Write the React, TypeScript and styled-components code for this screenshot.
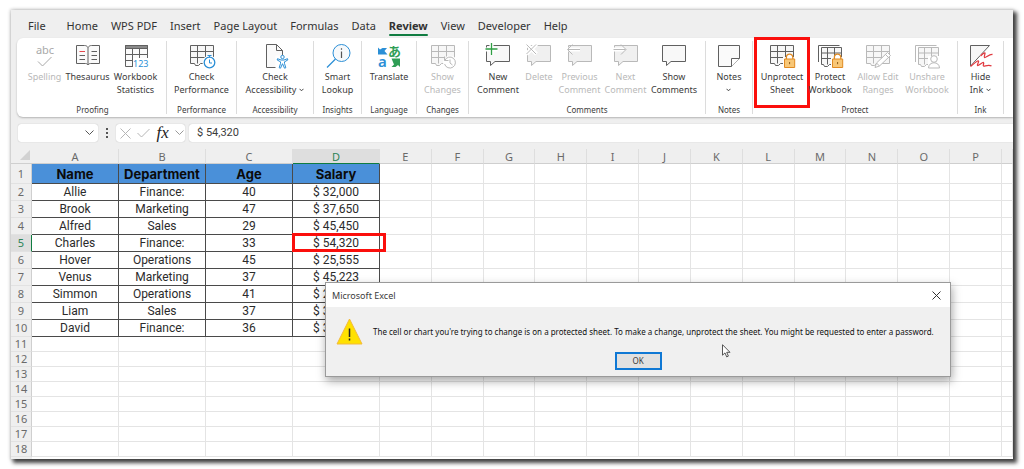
import React from "react";
import styled, { createGlobalStyle, css } from "styled-components";

const UI = `"Noto Sans", "Open Sans", sans-serif`;
const CELL = `Roboto, "Liberation Sans", sans-serif`;
const GREEN = "#107c41";
const INK = "#3b3b3b";
const MUTED = "#b9b9b9";
const BLUE = "#2b8fd6";

const GlobalStyle = createGlobalStyle`
  *, *::before, *::after { box-sizing: border-box; }
  html { background: #fff; }
  body { margin: 0; padding: 10px 11px 11px; overflow: hidden; font-family: ${UI}; color: ${INK}; }
  button, input, select { font: inherit; color: inherit; }
`;

const Window = styled.main`
  position: relative;
  background: #efefef;
  box-shadow: 0 0 3px 1px rgba(0, 0, 0, 0.16), 3px 3px 4px 1px rgba(0, 0, 0, 0.72);
`;

const Clip = styled.div`
  overflow: hidden;
`;

/* ---------- Tabs ---------- */

const TabBar = styled.nav`
  display: flex;
  align-items: center;
  gap: 13px;
  height: 28px;
  padding: 4px 17px 0;
`;

const Tab = styled.a<{ $active?: boolean; $wide?: boolean }>`
  position: relative;
  margin-right: ${(p) => (p.$wide ? 8 : 0)}px;
  font-size: 11px;
  line-height: 16px;
  color: #333;
  text-decoration: none;
  white-space: nowrap;
  ${(p) =>
    p.$active &&
    css`
      font-weight: 700;
      &::after {
        content: "";
        position: absolute;
        left: 0;
        right: 0;
        bottom: -2px;
        height: 2px;
        border-radius: 1px;
        background: ${GREEN};
      }
    `}
`;

/* ---------- Ribbon ---------- */

const Ribbon = styled.div`
  display: flex;
  height: 79px;
  margin-left: 6px;
  padding: 3px 0 3px 2px;
  background: #fff;
  border-radius: 6px 0 0 6px;
  box-shadow: 0 1px 2px rgba(0, 0, 0, 0.25);
`;

const Group = styled.section<{ $w: number }>`
  display: flex;
  flex: none;
  flex-direction: column;
  justify-content: space-between;
  width: ${(p) => p.$w}px;
  border-right: 1px solid #dcdcdc;
`;

const Tools = styled.div`
  display: flex;
  justify-content: center;
`;

const GroupName = styled.h2`
  margin: 0;
  font-size: 8px;
  font-weight: 400;
  line-height: 8px;
  text-align: center;
`;

const Tool = styled.button<{ $w: number; $marked?: boolean }>`
  position: relative;
  display: flex;
  flex: none;
  flex-direction: column;
  align-items: center;
  gap: 2px;
  width: ${(p) => p.$w}px;
  padding: 3px 0 0;
  border: 0;
  background: none;
  font-size: 9px;
  line-height: 13px;
  white-space: nowrap;
  &:disabled {
    color: ${MUTED};
  }
  ${(p) =>
    p.$marked &&
    css`
      &::after {
        content: "";
        position: absolute;
        inset: -4px -4px -12px;
        border: 3px solid #fb0f0c;
      }
    `}
`;

const Glyph = styled.svg`
  display: block;
  width: 26px;
  height: 24px;
  overflow: visible;
  fill: none;
  stroke: #606060;
  stroke-width: 1;
  button:disabled & {
    stroke: ${MUTED};
  }
`;

const Line = styled.span`
  display: flex;
  align-items: center;
  justify-content: center;
  gap: 3px;
  min-height: 13px;
`;

const Caret = () => (
  <svg width="5" height="4" viewBox="0 0 5 4" fill="none" stroke="#444">
    <path d="M.5 .8 2.5 2.8 4.5 .8" />
  </svg>
);

const Grid = () => (
  <>
    <path fill="#f7f7f7" d="M1.5 1.5h23v18h-13l-2 2h-3l-1-2h-4z" />
    <path d="M1.5 7.5h23M1.5 13.5h23M8.5 1.5v18M16.5 1.5v18" />
  </>
);

const Lock = () => (
  <>
    <path stroke="#fff" strokeWidth="3" d="M15.5 14.5h10v9h-10z" />
    <path stroke="#e08a22" strokeWidth="1.3" fill="#fff" d="M17.4 15.5v-2.2a3.2 3.2 0 0 1 6.4 0v2.2" />
    <path stroke="#e08a22" fill="#f8c777" d="M15.5 15h10.2v8.5h-10.2z" />
    <path stroke="#8a5a18" d="M20.6 18v2.2" />
  </>
);

const Sheets = () => (
  <>
    <path d="M1.5 18V1.5h21" />
    <path fill="#f7f7f7" d="M4.5 3.5h20v17h-12l-2 2h-3l-1-2h-2z" />
    <path d="M4.5 9h20M4.5 14.5h20M10.5 3.5v17M17.5 3.5v17" />
  </>
);

const Bubble = ({ fill = "#f8f8f8" }: { fill?: string }) => (
  <path fill={fill} d="M1.5 1.5h23v16h-14.5l-4.5 4v-4h-4z" />
);

const icons: Record<string, React.ReactNode> = {
  spelling: (
    <>
      <text x="13" y="10" textAnchor="middle" fontSize="11" fill="#a9a9a9" stroke="none">
        abc
      </text>
      <path stroke="#a9a9a9" d="M6 17.5l4.5 4.5 9-9" />
    </>
  ),
  thesaurus: (
    <>
      <path
        fill="#fafafa"
        d="M13 3.5C12 2 11 1.5 9.5 1.5h-8v18h9c1 0 2 .5 2.5 1.5.5-1 1.5-1.5 2.5-1.5h9v-18h-8c-1.5 0-2.5.5-3.5 2z"
      />
      <path d="M13 3.5v17.5M4.5 11.5h5.5M4.5 15.5h5.5M16.5 7.5h5.5M16.5 11.5h5.5M16.5 15.5h5.5" />
      <path stroke="#e5484d" d="M4.5 7.5h5.5" />
    </>
  ),
  statistics: (
    <>
      <path fill="#fafafa" d="M2.5 1.5h22v21h-22z" />
      <path fill="#8a8a8a" d="M2.5 1.5h22v3h-22z" />
      <path d="M2.5 10.5h22M2.5 16.5h22M9.5 4.5v18M16.5 4.5v18" />
      <path fill="#fff" stroke="none" d="M10 14h16v10h-16z" />
      <text x="10" y="23" fontSize="9" fill={BLUE} stroke="none">
        123
      </text>
    </>
  ),
  performance: (
    <>
      <Grid />
      <circle cx="20.5" cy="18.5" r="7" fill="#fff" stroke="none" />
      <circle cx="20.5" cy="18.5" r="5.3" fill="#fff" stroke={BLUE} strokeWidth="1.3" />
      <path stroke={BLUE} d="M20.5 15.5v3.5h2.5M18.5 11.5h4M20.5 11.5v2" />
    </>
  ),
  accessibility: (
    <>
      <path fill="#fafafa" d="M4.5 .5h10l6 6v17h-16z" />
      <path d="M14.5 .5v6h6" />
      <path stroke="#fff" strokeWidth="3" d="M15 13h11v10h-11z" fill="#fff" />
      <circle cx="20.5" cy="13" r="1.7" stroke={BLUE} fill="#fff" />
      <path
        stroke={BLUE}
        fill="#fff"
        d="M15.5 14.7l3.5 1.3h3l3.5-1.3.3 1.3-3.3 1.8v1.7l1.3 4.3-1.3.4-2-4.5-2 4.5-1.3-.4 1.3-4.3v-1.7l-3.3-1.8z"
      />
    </>
  ),
  lookup: (
    <>
      <circle cx="16.5" cy="9" r="8.5" fill="#f7f9fb" stroke={BLUE} />
      <path stroke={BLUE} strokeWidth="1.3" d="M10.5 15 2 23.5" />
      <path stroke="#555" strokeWidth="1.2" d="M16.5 7.5v6.5M16.5 4.3v1.5" />
    </>
  ),
  translate: (
    <>
      <path fill={BLUE} stroke="none" d="M2 3.5l2 2 2.5-1.5h4.500L8.500 7l3 3.500h-9.500z" />
      <text
        x="18.5"
        y="11.5"
        textAnchor="middle"
        fontSize="13"
        fontWeight="700"
        fontFamily="'Noto Sans CJK JP', sans-serif"
        fill="#2f9e56"
        stroke="none"
      >
        あ
      </text>
      <text x="6.5" y="23" textAnchor="middle" fontSize="15" fontWeight="600" fill={BLUE} stroke="none">
        a
      </text>
      <path fill="#2f9e56" stroke="none" d="M15.5 14.5h8.5v8.5l-2-2-2.5 2h-4l2.5-2.5z" />
    </>
  ),
  changes: (
    <>
      <Grid />
      <circle cx="20" cy="18.5" r="7" fill="#fff" stroke="none" />
      <path d="M14.8 16.5a5.5 5.5 0 1 1-.2 3.5M14.5 12.5v4h4M20 15.5v3.5l2.5 2" />
    </>
  ),
  newComment: (
    <>
      <Bubble />
      <path stroke="#fff" strokeWidth="4" d="M6.5-1v12M0 5.5h12.5" />
      <path stroke="#2f9e44" strokeWidth="1.3" d="M6.5-1v12M.5 5h12" />
    </>
  ),
  deleteComment: (
    <>
      <Bubble fill="#f0f0f0" />
      <path stroke="#fff" strokeWidth="4" d="M.5 0l10 10M10.5 0l-10 10" />
      <path d="M.5 .5l9.5 9.5M10 .5l-9.5 9.5" />
    </>
  ),
  previous: (
    <>
      <Bubble fill="#f0f0f0" />
      <path stroke="#fff" strokeWidth="4" d="M1 5.5h12" />
      <path d="M1 5.5h12M5.5 .5l-5 5 5 5" />
    </>
  ),
  next: (
    <>
      <Bubble fill="#f0f0f0" />
      <path stroke="#fff" strokeWidth="4" d="M0 5.5h12" />
      <path d="M.5 5.5h12M8 .5l5 5-5 5" />
    </>
  ),
  showComments: <Bubble />,
  notes: (
    <>
      <path fill="#fafafa" d="M2.5 1.5h21v13l-8 8h-13z" />
      <path fill="#fff" d="M15.5 22.5v-8h8" />
    </>
  ),
  unprotect: (
    <>
      <Grid />
      <Lock />
    </>
  ),
  protect: (
    <>
      <Sheets />
      <Lock />
    </>
  ),
  ranges: (
    <>
      <Grid />
      <path fill="#fff" d="M10 23.5l1.5-4.5L22.5 8.5l3 3L14.5 22z" />
      <path d="M20.5 10.5l3 3M11.5 19l3 3" />
    </>
  ),
  unshare: (
    <>
      <Sheets />
      <path fill="#fff" stroke="none" d="M14 12h12v12H14z" />
      <circle cx="20" cy="15" r="3.3" fill="#fff" />
      <path fill="#fff" d="M14.5 24c0-7 11-7 11 0z" />
    </>
  ),
  ink: (
    <>
      <path fill="#f7f7f7" d="M2.500 22V1.500h19z" />
      <path stroke="#fff" strokeWidth="4" d="M12.500 13l4-2M4 23l7-6" />
      <path
        stroke="#e0383e"
        strokeWidth="1.3"
        d="M12.500 12c2-2 4-3.500 4.500-3s-1.500 4-.5 4.500 5-3.500 8-3M2.500 22.500c3.500-3 7-6 8-5.500s-2 4-1 4.500 5-3.500 6-3-1 3 0 3.500 5-2 8 0"
      />
    </>
  ),
};

type ToolSpec = {
  icon: string;
  lines: string[];
  w: number;
  off?: boolean;
  caret?: boolean;
  marked?: boolean;
};

const groups: { name: string; w: number; tools: ToolSpec[] }[] = [
  {
    name: "Proofing",
    w: 148,
    tools: [
      { icon: "spelling", lines: ["Spelling"], w: 42, off: true },
      { icon: "thesaurus", lines: ["Thesaurus"], w: 44 },
      { icon: "statistics", lines: ["Workbook", "Statistics"], w: 52 },
    ],
  },
  { name: "Performance", w: 70, tools: [{ icon: "performance", lines: ["Check", "Performance"], w: 64 }] },
  { name: "Accessibility", w: 77, tools: [{ icon: "accessibility", lines: ["Check", "Accessibility"], w: 70, caret: true }] },
  { name: "Insights", w: 48, tools: [{ icon: "lookup", lines: ["Smart", "Lookup"], w: 42 }] },
  { name: "Language", w: 55, tools: [{ icon: "translate", lines: ["Translate"], w: 48 }] },
  { name: "Changes", w: 52, tools: [{ icon: "changes", lines: ["Show", "Changes"], w: 46, off: true }] },
  {
    name: "Comments",
    w: 237,
    tools: [
      { icon: "newComment", lines: ["New", "Comment"], w: 46 },
      { icon: "deleteComment", lines: ["Delete"], w: 36, off: true },
      { icon: "previous", lines: ["Previous", "Comment"], w: 45, off: true },
      { icon: "next", lines: ["Next", "Comment"], w: 47, off: true },
      { icon: "showComments", lines: ["Show", "Comments"], w: 50 },
    ],
  },
  { name: "Notes", w: 47, tools: [{ icon: "notes", lines: ["Notes", ""], w: 40, caret: true }] },
  {
    name: "Protect",
    w: 205,
    tools: [
      { icon: "unprotect", lines: ["Unprotect", "Sheet"], w: 48, marked: true },
      { icon: "protect", lines: ["Protect", "Workbook"], w: 48 },
      { icon: "ranges", lines: ["Allow Edit", "Ranges"], w: 48, off: true },
      { icon: "unshare", lines: ["Unshare", "Workbook"], w: 50, off: true },
    ],
  },
  { name: "Ink", w: 46, tools: [{ icon: "ink", lines: ["Hide", "Ink"], w: 40, caret: true }] },
];

/* ---------- Formula bar ---------- */

const FormulaBar = styled.div`
  display: flex;
  align-items: center;
  height: 32px;
  padding-left: 7px;
`;

const Field = styled.div`
  display: flex;
  align-items: center;
  height: 18px;
  background: #fff;
  border-radius: 3px;
  box-shadow: 0 0 1px rgba(0, 0, 0, 0.3);
`;

const NameField = styled(Field)`
  width: 80px;
  padding-right: 4px;
`;

const NameBox = styled.select`
  flex: 1;
  min-width: 0;
  height: 16px;
  padding: 0 4px;
  border: 0;
  background: none;
  appearance: none;
  outline: none;
  font-size: 11px;
`;

const Dots = styled.span`
  display: flex;
  flex-direction: column;
  gap: 2px;
  padding: 0 8px;
  i {
    width: 2px;
    height: 2px;
    background: #555;
  }
`;

const Actions = styled(Field)`
  justify-content: space-between;
  width: 69px;
  padding: 0 1px 0 4px;
`;

const Action = styled.button`
  display: flex;
  padding: 0;
  border: 0;
  background: none;
`;

const Fx = styled.span`
  font: italic 400 17px/18px "Liberation Serif", serif;
  color: #222;
`;

const FormulaField = styled(Field)`
  flex: 1;
  margin-left: 4px;
  border-radius: 3px 0 0 3px;
`;

const FormulaInput = styled.input`
  width: 100%;
  height: 16px;
  padding: 0 8px;
  border: 0;
  background: none;
  outline: none;
  font: 11px/16px ${CELL};
`;

/* ---------- Sheet ---------- */

const Sheet = styled.div`
  padding-bottom: 2px;
  background: linear-gradient(to right, #efefef 21px, #fff 21px);
`;

const SheetTable = styled.table`
  width: 100%;
  table-layout: fixed;
  border-collapse: separate;
  border-spacing: 0;
`;

const Col = styled.col<{ $w?: number }>`
  width: ${(p) => (p.$w ? `${p.$w}px` : "auto")};
`;

const Corner = styled.td`
  height: 15px;
  padding: 0 2px 2px 0;
  border-bottom: 1px solid #cfcfcf;
  background: #efefef;
  svg {
    display: block;
    margin-left: auto;
  }
`;

const ColHead = styled.th<{ $active?: boolean }>`
  height: 15px;
  padding: 0;
  border-right: 1px solid #dedede;
  border-bottom: 1px solid ${(p) => (p.$active ? GREEN : "#cfcfcf")};
  background: ${(p) => (p.$active ? "#dedede" : "#efefef")};
  color: ${(p) => (p.$active ? "#2d8458" : "#6a6a6a")};
  font-size: 11px;
  font-weight: 400;
  line-height: 13px;
`;

const Row = styled.tr<{ $h: number }>`
  height: ${(p) => p.$h}px;
`;

const RowHead = styled.th<{ $active?: boolean }>`
  padding: 0;
  border-right: 1px solid ${(p) => (p.$active ? GREEN : "#cfcfcf")};
  border-bottom: 1px solid #e2e2e2;
  background: ${(p) => (p.$active ? "#dedede" : "#efefef")};
  color: ${(p) => (p.$active ? "#2d8458" : "#6a6a6a")};
  font-size: 11px;
  font-weight: 400;
  line-height: 14px;
`;

const Cell = styled.td<{ $kind?: "title" | "data"; $marked?: boolean }>`
  position: relative;
  padding: 0;
  border-right: 1px solid #e4e4e4;
  border-bottom: 1px solid #e4e4e4;
  text-align: center;
  font: 12px/14px ${CELL};
  color: #2b2b2b;
  white-space: nowrap;
  ${(p) => p.$kind && css`border-color: #4a4a4a;`}
  ${(p) =>
    p.$kind === "title" &&
    css`
      background: #4a90d9;
      font: 700 13px/14px Inter, ${CELL};
      color: #0b0b0b;
    `}
  ${(p) =>
    p.$marked &&
    css`
      &::after {
        content: "";
        position: absolute;
        z-index: 1;
        inset: -2px -7px -1px -1px;
        border: 3px solid #fb0f0c;
      }
    `}
`;

const letters = "ABCDEFGHIJKLMNOP".split("");

const records: string[][] = [
  ["Name", "Department", "Age", "Salary"],
  ["Allie", "Finance:", "40", "$ 32,000"],
  ["Brook", "Marketing", "47", "$ 37,650"],
  ["Alfred", "Sales", "29", "$ 45,450"],
  ["Charles", "Finance:", "33", "$ 54,320"],
  ["Hover", "Operations", "45", "$ 25,555"],
  ["Venus", "Marketing", "37", "$ 45,223"],
  ["Simmon", "Operations", "41", "$ 25,450"],
  ["Liam", "Sales", "37", "$ 35,200"],
  ["David", "Finance:", "36", "$ 35,600"],
];

const rowHeight = (r: number) => (r === 0 ? 20 : r < records.length ? 17 : 15);

/* ---------- Dialog ---------- */

const Dialog = styled.div`
  position: absolute;
  z-index: 2;
  top: 272px;
  left: 314px;
  right: 62px;
  border: 1px solid #9a9a9a;
  background: #f0f0f0;
  box-shadow: 1px 4px 9px rgba(0, 0, 0, 0.35);
`;

const TitleBar = styled.header`
  display: flex;
  align-items: center;
  justify-content: space-between;
  height: 24px;
  padding: 0 9px 0 6px;
  background: #fff;
  font-size: 9px;
`;

const Message = styled.div`
  display: flex;
  align-items: center;
  gap: 10px;
  height: 44px;
  padding: 5px 8px 0 10px;
  white-space: nowrap;
  svg {
    flex: none;
  }
  p {
    margin: 0;
    font-size: 8px;
    line-height: 12px;
    color: #111;
  }
`;

const Footer = styled.footer`
  display: flex;
  justify-content: center;
  padding: 1px 0 6px;
`;

const OkButton = styled.button`
  width: 47px;
  height: 18px;
  padding: 0;
  border: 2px solid #0f78d4;
  background: #e1e1e1;
  font-size: 8px;
  line-height: 12px;
`;

const Pointer = styled.svg`
  position: absolute;
  z-index: 3;
  top: 334px;
  right: 282px;
`;

const tabs = ["File", "Home", "WPS PDF", "Insert", "Page Layout", "Formulas", "Data", "Review", "View", "Developer", "Help"];

export default function App() {
  return (
    <>
      <GlobalStyle />
      <Window>
        <Clip>
          <TabBar>
            {tabs.map((t) => (
              <Tab key={t} href="#" $active={t === "Review"} $wide={t === "File"}>
                {t}
              </Tab>
            ))}
          </TabBar>
          <Ribbon>
            {groups.map((g) => (
              <Group key={g.name} $w={g.w}>
                <Tools>
                  {g.tools.map((t) => (
                    <Tool key={t.icon} $w={t.w} disabled={t.off} $marked={t.marked}>
                      <Glyph viewBox="0 0 26 24">{icons[t.icon]}</Glyph>
                      <span>
                        {t.lines.map((line, i) => (
                          <Line key={i}>
                            {line}
                            {t.caret && i === t.lines.length - 1 && <Caret />}
                          </Line>
                        ))}
                      </span>
                    </Tool>
                  ))}
                </Tools>
                <GroupName>{g.name}</GroupName>
              </Group>
            ))}
          </Ribbon>

          <FormulaBar>
            <NameField>
              <NameBox aria-label="Name box">
                <option></option>
              </NameBox>
              <svg width="9" height="6" viewBox="0 0 9 6" fill="none" stroke="#555">
                <path d="M.5 .5 4.5 4.5 8.5 .5" />
              </svg>
            </NameField>
            <Dots>
              <i />
              <i />
              <i />
            </Dots>
            <Actions>
              <Action aria-label="Cancel">
                <svg width="11" height="11" viewBox="0 0 11 11" fill="none" stroke="#b5b5b5">
                  <path d="M.5 .5l10 10M10.5 .5l-10 10" />
                </svg>
              </Action>
              <Action aria-label="Enter">
                <svg width="13" height="10" viewBox="0 0 13 10" fill="none" stroke="#b5b5b5">
                  <path d="M.5 5l4 4 8-8" />
                </svg>
              </Action>
              <Action aria-label="Insert function">
                <Fx>fx</Fx>
              </Action>
              <svg width="9" height="6" viewBox="0 0 9 6" fill="none" stroke="#999">
                <path d="M.5 .5 4.5 4.5 8.5 .5" />
              </svg>
            </Actions>
            <FormulaField>
              <FormulaInput aria-label="Formula" defaultValue="$ 54,320" />
            </FormulaField>
          </FormulaBar>

          <Sheet>
            <SheetTable>
              <colgroup>
                <Col $w={21} />
                <Col $w={87} />
                <Col $w={87} />
                <Col $w={87} />
                <Col $w={87} />
                {letters.slice(4).map((l) => (
                  <Col key={l} />
                ))}
                <Col $w={11} />
              </colgroup>
              <thead>
                <tr>
                  <Corner>
                    <svg width="10" height="10" viewBox="0 0 10 10" fill="#d2d2d2">
                      <path d="M10 0v10H0z" />
                    </svg>
                  </Corner>
                  {letters.map((l) => (
                    <ColHead key={l} scope="col" $active={l === "D"}>
                      {l}
                    </ColHead>
                  ))}
                  <ColHead as="td" />
                </tr>
              </thead>
              <tbody>
                {Array.from({ length: 18 }, (_, r) => (
                  <Row key={r} $h={rowHeight(r)}>
                    <RowHead scope="row" $active={r === 4}>
                      {r + 1}
                    </RowHead>
                    {Array.from({ length: 17 }, (_, c) => {
                      const text = records[r]?.[c];
                      return (
                        <Cell key={c} $kind={text ? (r === 0 ? "title" : "data") : undefined} $marked={r === 4 && c === 3}>
                          {text}
                        </Cell>
                      );
                    })}
                  </Row>
                ))}
              </tbody>
            </SheetTable>
          </Sheet>
        </Clip>

        <Dialog role="dialog" aria-labelledby="dialog-title">
          <TitleBar>
            <span id="dialog-title">Microsoft Excel</span>
            <Action aria-label="Close">
              <svg width="9" height="9" viewBox="0 0 9 9" fill="none" stroke="#333">
                <path d="M.5 .5l8 8M8.5 .5l-8 8" />
              </svg>
            </Action>
          </TitleBar>
          <Message>
            <svg width="27" height="27" viewBox="0 0 27 27">
              <path d="M13.5 1 26 26H1z" fill="#ffe100" stroke="#f3b93b" strokeLinejoin="round" />
              <path d="M13.5 10.5v8.5M13.5 20.5v2" stroke="#222" strokeWidth="1.5" />
            </svg>
            <p>
              The cell or chart you're trying to change is on a protected sheet. To make a change, unprotect the sheet. You
              might be requested to enter a password.
            </p>
          </Message>
          <Footer>
            <OkButton>OK</OkButton>
          </Footer>
        </Dialog>
        <Pointer width="9" height="14" viewBox="0 0 9 14">
          <path d="M.5 .7v10.5l2.5-2.3 1.7 4 1.7-.8-1.7-3.8h3.3z" fill="#fff" stroke="#444" strokeWidth=".9" />
        </Pointer>
      </Window>
    </>
  );
}
